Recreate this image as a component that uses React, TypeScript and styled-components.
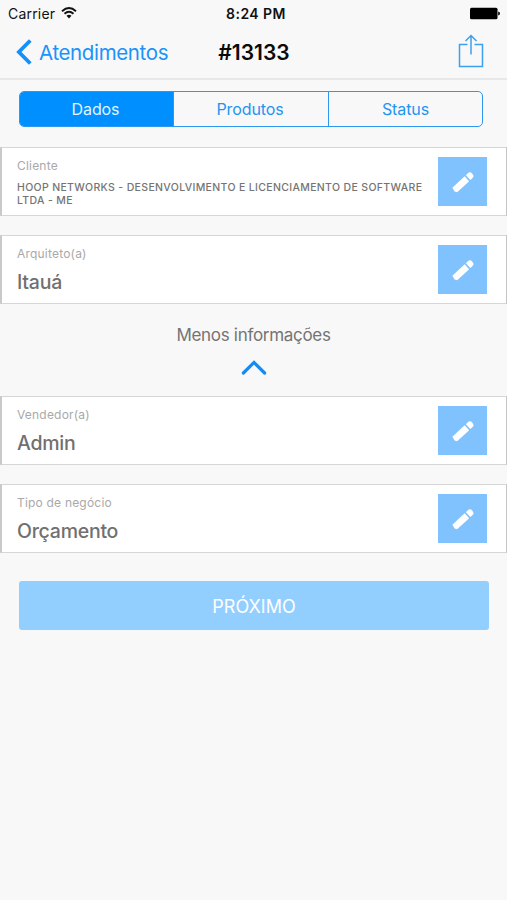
import React from "react";
import styled, { createGlobalStyle } from "styled-components";

const GlobalStyle = createGlobalStyle`
  * { box-sizing: border-box; }
  body {
    margin: 0;
    background: #f8f8f8;
    font-family: Inter, "Liberation Sans", sans-serif;
  }
  button { font: inherit; border: 0; padding: 0; margin: 0; background: none; }
`;

const Screen = styled.div`
  width: 507px;
  height: 900px;
  overflow: hidden;
  display: flex;
  flex-direction: column;
  background: #f8f8f8;
`;

const Text = styled.span<{ $size: number; $spacing?: number; $weight?: number }>`
  font-size: ${(p) => p.$size}px;
  letter-spacing: ${(p) => p.$spacing ?? 0}px;
  font-weight: ${(p) => p.$weight ?? 400};
  white-space: nowrap;
`;

const StatusBar = styled.div`
  height: 27px;
  display: grid;
  grid-template-columns: 1fr auto 1fr;
  align-items: center;
  padding: 0 7px 1px 8px;
  color: #111;
`;

const Carrier = styled.div`
  display: flex;
  align-items: center;
  gap: 6px;
`;

const Clock = styled(Text)`
  padding-left: 4px;
`;

const Battery = styled.svg`
  justify-self: end;
`;

const NavBar = styled.header`
  height: 53px;
  display: grid;
  grid-template-columns: 1fr auto 1fr;
  align-items: center;
  padding: 0 23px 1px 16px;
  border-bottom: 2px solid #e8e8e8;
`;

const BackButton = styled.button`
  display: flex;
  align-items: center;
  gap: 7px;
  color: #1c93f8;
`;

const Title = styled.h1`
  margin: 2px 0 0 8px;
  font-size: 21px;
  line-height: 24px;
  font-weight: 600;
  letter-spacing: 0;
  color: #0a0a0a;
`;

const ShareButton = styled.button`
  justify-self: end;
  display: flex;
  padding-bottom: 2px;
`;

const Tabs = styled.div`
  height: 36px;
  margin: 11px 24px 20px 19px;
  display: grid;
  grid-template-columns: 153px 155px 1fr;
  border: 1px solid #2d98f2;
  border-radius: 5px;
  overflow: hidden;
  flex: none;
`;

const Tab = styled.button<{ $active?: boolean }>`
  display: flex;
  align-items: center;
  justify-content: center;
  padding-right: 2px;
  color: ${(p) => (p.$active ? "#e3f5ff" : "#2394f2")};
  background: ${(p) => (p.$active ? "#008fff" : "transparent")};
  & + & { border-left: 1px solid #2d98f2; }
  &:last-child { padding-right: 0; }
`;

const CardStack = styled.div`
  display: flex;
  flex-direction: column;
  gap: 19px;
`;

const Card = styled.section`
  height: 69px;
  display: flex;
  justify-content: space-between;
  padding: 9px 18.6px 9px 15px;
  background: #fff;
  border: 1px solid #d6d6d6;
  border-left: 2px solid #c9c9c9;
  border-right-color: #c4c4c4;
`;

const Label = styled.div`
  height: 18px;
  line-height: 18px;
  font-size: 12px;
  letter-spacing: 0.2px;
  color: #a9a9a9;
`;

const Value = styled.div`
  margin-top: 6px;
  font-size: 19.5px;
  line-height: 26px;
  font-weight: 500;
  letter-spacing: -0.25px;
  color: #707070;
`;

const CompanyName = styled.div`
  margin-top: 6px;
  font-size: 10.5px;
  line-height: 13px;
  font-weight: 500;
  letter-spacing: 0.34px;
  color: #747474;
  white-space: nowrap;
`;

const EditButton = styled.button`
  width: 49px;
  height: 49px;
  display: flex;
  align-items: center;
  justify-content: center;
  background: #80c2fd;
`;

const Toggle = styled.button`
  height: 92px;
  display: flex;
  flex-direction: column;
  align-items: center;
  padding-top: 20px;
  gap: 13px;
  line-height: 23px;
  color: #747474;
`;

const NextButton = styled.button`
  height: 49px;
  margin: 28px 18px 0 19px;
  padding-top: 1px;
  border-radius: 3px;
  background: #92cfff;
  color: #fff;
  flex: none;
`;

const EditAction = ({ field }: { field: string }) => (
  <EditButton aria-label={`Editar ${field}`}>
    <svg width="28" height="28" viewBox="0 0 28 28">
      <g transform="translate(14.4 14) rotate(-43)" fill="#fff">
        <path d="M-13 1 L-12-3.3 H4.8 V3.3 H-11.6Z" />
        <path d="M6.5-3.3H9.5Q12.2-3.2 12.2 0Q12.2 3.2 9.5 3.3H6.5Z" />
      </g>
    </svg>
  </EditButton>
);

const FieldCard = ({ label, value }: { label: string; value: string }) => (
  <Card>
    <div>
      <Label>{label}</Label>
      <Value>{value}</Value>
    </div>
    <EditAction field={label} />
  </Card>
);

export default function App() {
  return (
    <>
      <GlobalStyle />
      <Screen>
        <StatusBar>
          <Carrier>
            <Text $size={14} $spacing={0.2}>Carrier</Text>
            <svg width="16" height="12" viewBox="0 0 16 12" fill="none" stroke="#111" strokeWidth="1.9">
              <path d="M1 4.2Q8-2.1 15 4.2M3.5 6.8Q8 2.7 12.5 6.8" />
              <path d="M5.5 8.8Q8 6.7 10.5 8.8L8 11.5Z" fill="#111" stroke="none" />
            </svg>
          </Carrier>
          <Clock $size={14} $weight={600} $spacing={0.45}>8:24 PM</Clock>
          <Battery width="31" height="13" viewBox="0 0 31 13">
            <rect x="1" y="0.8" width="27.5" height="11.4" rx="1.5" fill="#000" />
            <path d="M29.2 4.5Q31 5 31 6.5T29.2 8.5Z" fill="#000" />
          </Battery>
        </StatusBar>

        <NavBar>
          <BackButton>
            <svg width="16" height="26" viewBox="0 0 16 26" fill="none" stroke="#1590fa" strokeWidth="3.8">
              <path d="M14.3 1.5L2.9 13L14.3 24.5" />
            </svg>
            <Text $size={20.5} $spacing={-0.36}>Atendimentos</Text>
          </BackButton>
          <Title>#13133</Title>
          <ShareButton aria-label="Compartilhar">
            <svg width="26" height="34" viewBox="0 0 26 34" fill="none" stroke="#409fec" strokeWidth="1.5">
              <path d="M9.5 10.5H1.5V32.5H24.5V10.5H16.5M13 20.5V1.5M7.5 7L13 1.5L18.5 7" />
            </svg>
          </ShareButton>
        </NavBar>

        <Tabs>
          <Tab $active><Text $size={16} $spacing={-0.1}>Dados</Text></Tab>
          <Tab><Text $size={16} $spacing={-0.1}>Produtos</Text></Tab>
          <Tab><Text $size={16} $spacing={-0.1}>Status</Text></Tab>
        </Tabs>

        <CardStack>
          <Card>
            <div>
              <Label>Cliente</Label>
              <CompanyName>
                HOOP NETWORKS - DESENVOLVIMENTO E LICENCIAMENTO DE SOFTWARE
                <br />
                LTDA - ME
              </CompanyName>
            </div>
            <EditAction field="Cliente" />
          </Card>
          <FieldCard label="Arquiteto(a)" value="Itauá" />
        </CardStack>

        <Toggle>
          <Text $size={17} $spacing={-0.3}>Menos informações</Text>
          <svg width="26" height="15" viewBox="0 0 26 15" fill="none" stroke="#148cf2" strokeWidth="3.2" strokeLinecap="round">
            <path d="M2.4 13L13 2.4L23.6 13" />
          </svg>
        </Toggle>

        <CardStack>
          <FieldCard label="Vendedor(a)" value="Admin" />
          <FieldCard label="Tipo de negócio" value="Orçamento" />
        </CardStack>

        <NextButton>
          <Text $size={18}>PRÓXIMO</Text>
        </NextButton>
      </Screen>
    </>
  );
}
